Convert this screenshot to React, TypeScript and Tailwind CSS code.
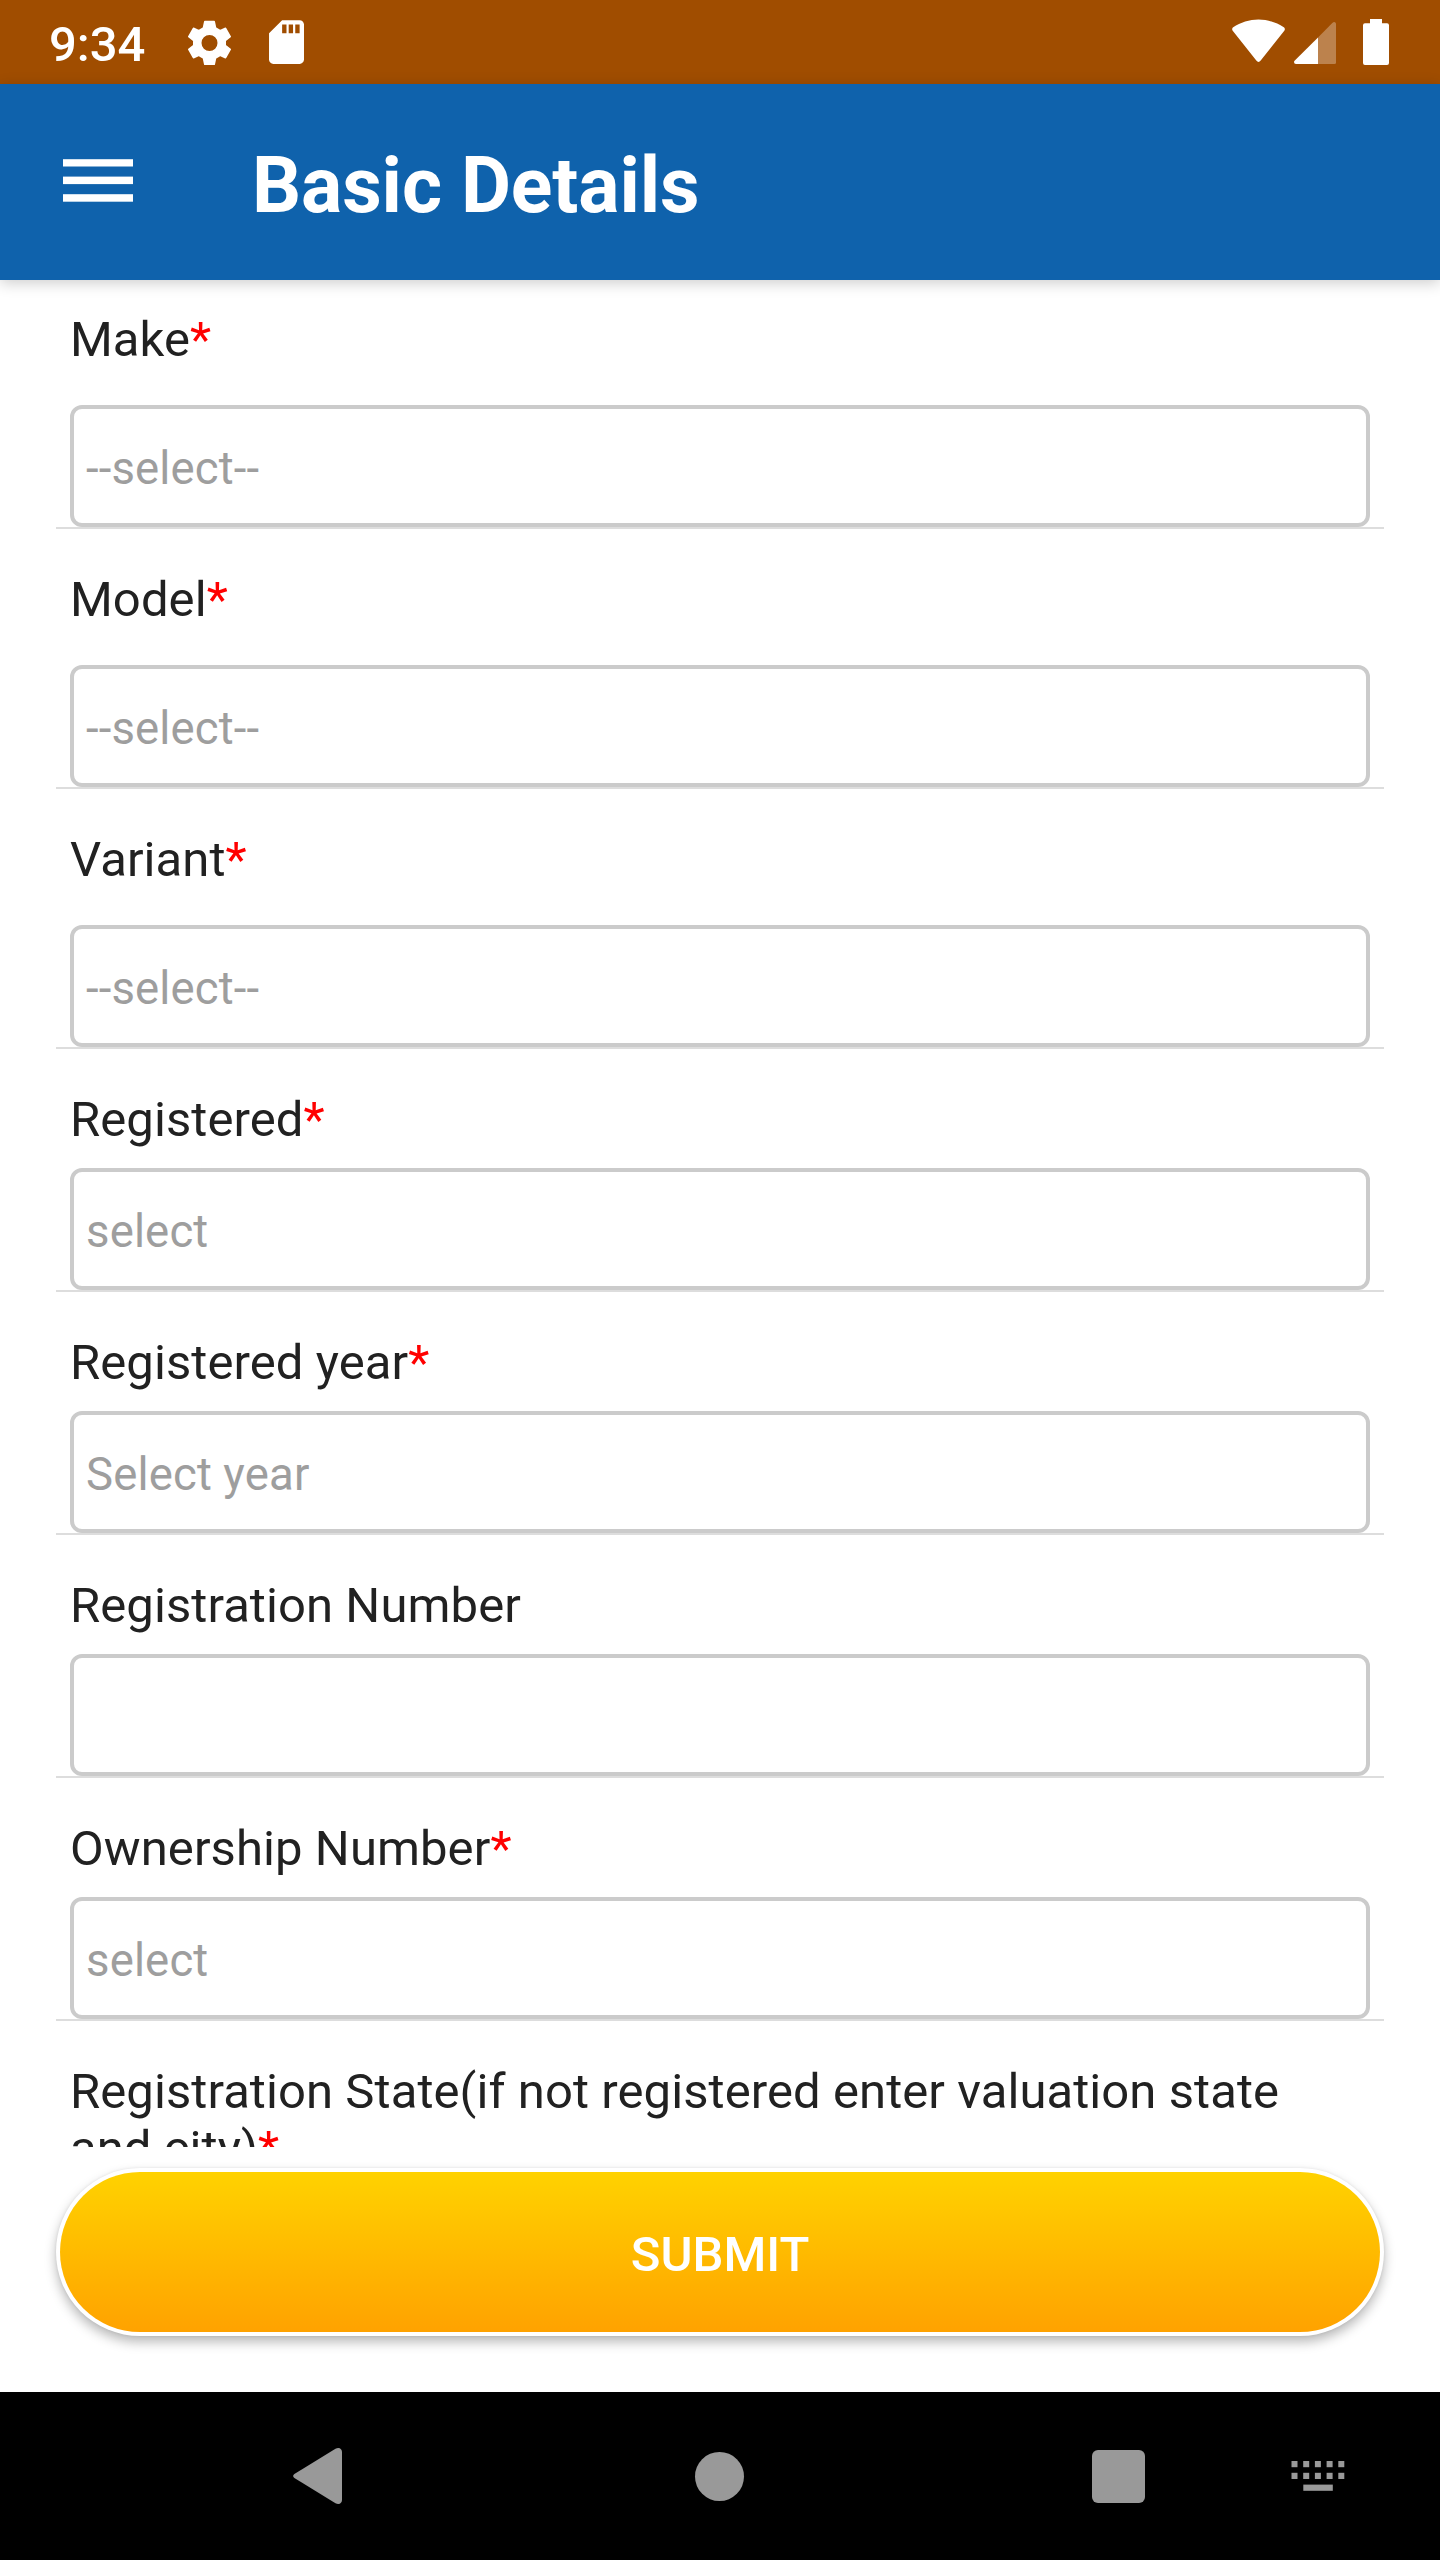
type Field = { label: string; required?: boolean; placeholder: string; roomy?: boolean };

const fields: Field[] = [
  { label: 'Make', required: true, placeholder: '--select--', roomy: true },
  { label: 'Model', required: true, placeholder: '--select--', roomy: true },
  { label: 'Variant', required: true, placeholder: '--select--', roomy: true },
  { label: 'Registered', required: true, placeholder: 'select' },
  { label: 'Registered year', required: true, placeholder: 'Select year' },
  { label: 'Registration Number', placeholder: '' },
  { label: 'Ownership Number', required: true, placeholder: 'select' },
];

function Label({ text, required }: { text: string; required?: boolean }) {
  return (
    <p className="px-[14px] text-[49px] leading-[57px] tracking-[0.08px] text-[#212121]">
      {text}
      {required && <span className="text-[#ff0000]">*</span>}
    </p>
  );
}

function FormField({ label, required, placeholder, roomy }: Field) {
  return (
    <div className="border-b-2 border-[#dddddd] pt-[42px]">
      <Label text={label} required={required} />
      <div
        className={`mx-[14px] flex h-[122px] items-center rounded-[12px] border-4 border-[#cbcbcb] px-3 pt-[5px] text-[45.5px] leading-[53px] tracking-[0.15px] text-[#9e9e9e] ${
          roomy ? 'mt-[37px]' : 'mt-5'
        }`}
      >
        {placeholder}
      </div>
    </div>
  );
}

function StatusBar() {
  return (
    <div className="flex h-[84px] shrink-0 items-center bg-[#a04d00] pr-[51px] pl-[49px] text-white">
      <span className="w-[138px] pt-[5px] text-[49px] leading-[57px] font-medium">9:34</span>
      <svg className="h-[45px] w-[45px]" viewBox="-67.5 -69 135 135">
        <path
          fill="#fff"
          stroke="#fff"
          strokeWidth="5"
          strokeLinejoin="round"
          fillRule="evenodd"
          d="M-14-64H14L18-45L32-37L48-44L62-19L47-7V7L62 19L48 44L32 37L18 45L14 64H-14L-18 45L-32 37L-48 44L-62 19L-47 7V-7L-62-19L-48-44L-32-37L-18-45ZM26.5 0A26.5 26.5 0 1 0-26.5 0A26.5 26.5 0 1 0 26.5 0Z"
        />
      </svg>
      <svg className="ml-[37px] h-11 w-[35px]" viewBox="4 2 16 20">
        <path
          fill="#fff"
          d="M18 2h-8L4.02 8 4 20c0 1.1.9 2 2 2h12c1.1 0 2-.9 2-2V4c0-1.1-.9-2-2-2zm-6 6h-2V4h2v4zm3 0h-2V4h2v4zm3 0h-2V4h2v4z"
        />
      </svg>
      <svg className="ml-auto h-[46px] w-[53px]" viewBox="0 0 53 46">
        <path
          fill="#fff"
          d="M26.5.5C17.500.5 8.500 3.400 1.200 8.300Q-.6 9.700.7 11.800L24.300 41.600Q26.500 44.500 28.700 41.600L52.300 11.800Q53.600 9.700 51.800 8.300C44.500 3.400 35.500.5 26.500.5Z"
        />
      </svg>
      <svg className="ml-[9px] h-[46px] w-[42px]" viewBox="0 0 42 46">
        <path
          fill="#fff"
          fillOpacity="0.3"
          d="M24 18.500L38.300 4Q40 2.400 41.400 3.400Q42 4 42 5V43.500Q42 45 40.500 45H24Z"
        />
        <path fill="#fff" d="M24 18.500V45H2Q0 45 0 43Q0 42.200.8 41.400Z" />
      </svg>
      <svg className="ml-[27px] h-[46px] w-[26px]" viewBox="0 0 26 46">
        <path
          fill="#fff"
          d="M7 0H19V4.300H24Q26 4.300 26 6.300V44Q26 46 24 46H2Q0 46 0 44V6.300Q0 4.300 2 4.300H7Z"
        />
      </svg>
    </div>
  );
}

function AppBar() {
  return (
    <header className="relative z-10 flex h-[196px] shrink-0 items-center bg-[#0f62ac] pl-[63px] text-white shadow-[0_3px_14px_rgba(0,0,0,0.2)]">
      <svg className="-mt-[3px] h-[43px] w-[70px]" viewBox="0 0 70 43" fill="#fff">
        <rect y="0.2" width="70" height="7.300" />
        <rect y="17.600" width="70" height="7.500" />
        <rect y="35.200" width="70" height="7.500" />
      </svg>
      <h1 className="ml-[119px] pt-2 text-[77px] leading-[90px] font-bold tracking-[-0.1px]">Basic Details</h1>
    </header>
  );
}

function NavigationBar() {
  const keys = [0, 11.7, 23.4, 35.1, 46.8];
  return (
    <nav className="flex h-[168px] shrink-0 items-center bg-black pl-[293px]">
      <svg className="h-14 w-[49px]" viewBox="0 0 49 56">
        <path fill="#999" d="M1.400 26L42.500.8C46-1.200 49 .8 49 4V52C49 55.200 46 57.200 42.500 55.200L1.400 30Q-1.200 28 1.400 26Z" />
      </svg>
      <div className="ml-[353px] h-[49px] w-[49px] rounded-full bg-[#999]" />
      <div className="ml-[348px] h-[53px] w-[53px] rounded-[6px] bg-[#999]" />
      <svg className="ml-[146px] h-[30px] w-[54px]" viewBox="0 0 54 30" fill="#999">
        {keys.map((x) => (
          <rect key={x} x={x + 0.5} y="0" width="6" height="6.200" />
        ))}
        {keys.map((x) => (
          <rect key={x} x={x + 0.5} y="11.800" width="6" height="6.200" />
        ))}
        <rect x="12.300" y="23.600" width="29.500" height="6.200" />
      </svg>
    </nav>
  );
}

export default function App() {
  return (
    <div className="flex h-[2560px] w-[1440px] flex-col overflow-hidden bg-white font-['Roboto',sans-serif]">
      <StatusBar />
      <AppBar />
      <main className="h-[1867px] shrink-0 overflow-hidden px-14">
        <div className="-mt-[11px]">
          {fields.map((f) => (
            <FormField key={f.label} {...f} />
          ))}
          <div className="pt-[42px]">
            <Label text="Registration State(if not registered enter valuation state and city)" required />
          </div>
        </div>
      </main>
      <div className="flex-1 px-14 pt-[21px]">
        <button className="flex h-[168px] w-full items-center justify-center rounded-full bg-white p-1 shadow-[0_6px_12px_rgba(0,0,0,0.28),0_0_3px_rgba(0,0,0,0.08)]">
          <span className="flex h-full w-full items-center justify-center rounded-full bg-linear-to-b from-[#ffd200] to-[#ffa200] pt-[4px] text-[49px] leading-[57px] font-medium text-white">
            SUBMIT
          </span>
        </button>
      </div>
      <NavigationBar />
    </div>
  );
}
